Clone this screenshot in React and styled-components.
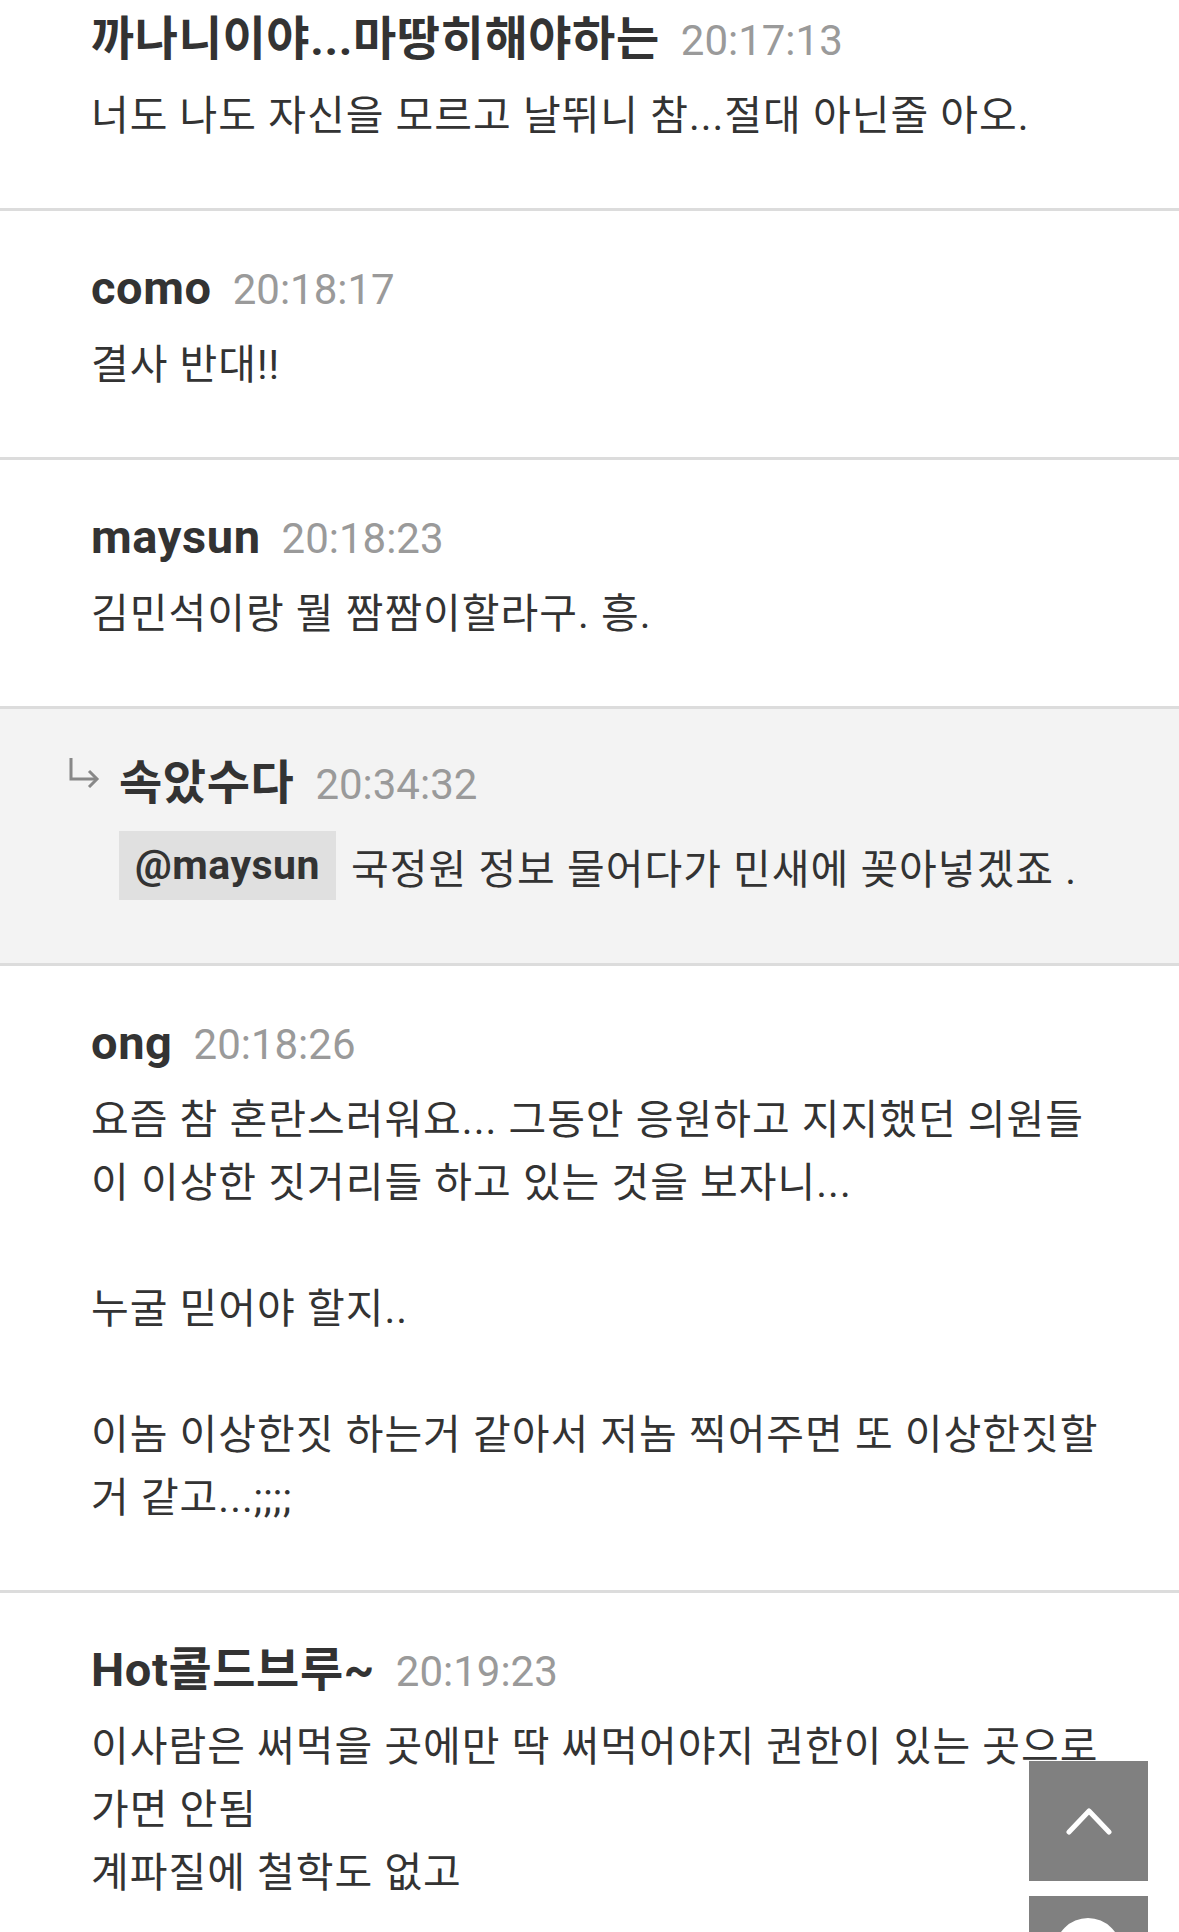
import React from "react";
import styled, { createGlobalStyle } from "styled-components";

const GlobalStyle = createGlobalStyle`
  body {
    margin: 0;
    background: #fff;
    font-family: Roboto, "Noto Sans CJK KR", sans-serif;
    color: #333;
  }
`;

const Page = styled.div`
  position: relative;
  height: 1932px;
  overflow: hidden;
`;

const List = styled.div`
  margin-top: -38px;
`;

const Item = styled.div`
  display: flex;
  padding: ${({ $reply }) => ($reply ? "42px 0 63px 68px" : "45px 0 60px 91px")};
  background: ${({ $reply }) => ($reply ? "#f3f3f3" : "#fff")};
  border-bottom: 3px solid #dcdcdc;
`;

const ArrowCol = styled.div`
  width: 51px;
  flex-shrink: 0;
  padding-top: 7px;
  color: #888;
`;

const Content = styled.div`
  display: flex;
  flex-direction: column;
  gap: ${({ $reply }) => ($reply ? "16px" : "14px")};
  min-width: 0;
`;

const Head = styled.div`
  display: flex;
  align-items: baseline;
  gap: 21px;
  height: 64px;
  line-height: 64px;
  white-space: nowrap;
`;

const Name = styled.span`
  font-size: 47px;
  font-weight: 700;
  letter-spacing: 0.6px;
  color: #333;
`;

const Time = styled.span`
  font-size: 42px;
  color: #9a9a9a;
`;

const Body = styled.div`
  font-size: 41px;
  letter-spacing: 1px;
  line-height: 63px;
  white-space: pre;
  color: #333;
`;

const MentionRow = styled.div`
  display: flex;
  align-items: center;
  gap: 15px;
  height: 69px;
  font-size: 41px;
  letter-spacing: 1px;
  white-space: pre;
`;

const Mention = styled.span`
  background: #e0e0e0;
  padding: 0 16px;
  height: 69px;
  line-height: 69px;
  font-weight: 700;
  letter-spacing: 0.5px;
`;

const FloatBar = styled.div`
  position: absolute;
  right: 31px;
  top: 1761px;
  display: flex;
  flex-direction: column;
  gap: 15px;
`;

const FloatButton = styled.div`
  width: 119px;
  height: 120px;
  background: #808080;
  display: flex;
  align-items: center;
  justify-content: center;
  overflow: hidden;
  position: relative;
`;

const Dot = styled.div`
  position: absolute;
  top: 22px;
  left: 26px;
  width: 66px;
  height: 66px;
  border-radius: 50%;
  background: #fff;
`;

const ReplyArrow = () => (
  <svg width="32" height="30" viewBox="0 0 32 30" fill="none" stroke="currentColor" strokeWidth="3">
    <path d="M3 0 V21 H29" />
    <path d="M21 13 L29 21 L21 29" />
  </svg>
);

const comments = [
  { name: "까나니이야...마땅히해야하는", time: "20:17:13", body: "너도 나도 자신을 모르고 날뛰니 참...절대 아닌줄 아오." },
  { name: "como", time: "20:18:17", body: "결사 반대!!" },
  { name: "maysun", time: "20:18:23", body: "김민석이랑 뭘 짬짬이할라구. 흥." },
  { name: "속았수다", time: "20:34:32", reply: "@maysun", body: "국정원 정보 물어다가 민새에 꽂아넣겠죠 ." },
  {
    name: "ong",
    time: "20:18:26",
    body:
      "요즘 참 혼란스러워요... 그동안 응원하고 지지했던 의원들\n이 이상한 짓거리들 하고 있는 것을 보자니...\n\n누굴 믿어야 할지..\n\n이놈 이상한짓 하는거 같아서 저놈 찍어주면 또 이상한짓할\n거 같고...;;;;",
  },
  {
    name: "Hot콜드브루~",
    time: "20:19:23",
    body: "이사람은 써먹을 곳에만 딱 써먹어야지 권한이 있는 곳으로\n가면 안됨\n계파질에 철학도 없고",
  },
];

const Comment = ({ c }) => {
  const isReply = !!c.reply;
  return (
    <Item $reply={isReply}>
      {isReply && (
        <ArrowCol>
          <ReplyArrow />
        </ArrowCol>
      )}
      <Content $reply={isReply}>
        <Head>
          <Name>{c.name}</Name>
          <Time>{c.time}</Time>
        </Head>
        {isReply ? (
          <MentionRow>
            <Mention>{c.reply}</Mention>
            <span>{c.body}</span>
          </MentionRow>
        ) : (
          <Body>{c.body}</Body>
        )}
      </Content>
    </Item>
  );
};

export default function App() {
  return (
    <Page>
      <GlobalStyle />
      <List>
        {comments.map((c, i) => (
          <Comment key={i} c={c} />
        ))}
      </List>
      <FloatBar>
        <FloatButton>
          <svg width="46" height="28" viewBox="0 0 46 28" fill="none" stroke="#fff" strokeWidth="5" strokeLinecap="round" strokeLinejoin="round">
            <path d="M3 25 L23 4 L43 25" />
          </svg>
        </FloatButton>
        <FloatButton>
          <Dot />
        </FloatButton>
      </FloatBar>
    </Page>
  );
}
